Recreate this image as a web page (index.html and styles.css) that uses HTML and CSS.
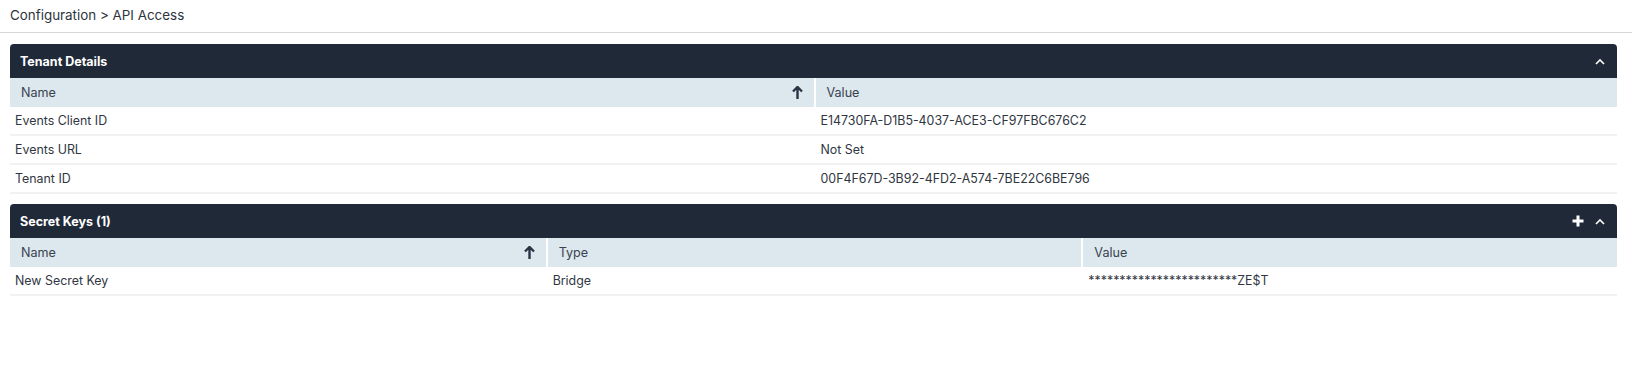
FILE: index.html
```html
<!DOCTYPE html>
<html>
<head>
<meta charset="utf-8">
<link rel="stylesheet" href="styles.css">
</head>
<body>
<div class="breadcrumb">Configuration &gt; API Access</div>
<main class="content">
  <section class="panel">
    <div class="panel-head">
      <span class="panel-title">Tenant Details</span>
      <span class="panel-actions">
        <svg class="chev" width="10" height="7" viewBox="0 0 10 7"><path d="M1 6 L5 2 L9 6" fill="none" stroke="#fff" stroke-width="1.6"/></svg>
      </span>
    </div>
    <div class="grid cols-2">
      <div class="th">Name
        <svg class="sort" width="11" height="14" viewBox="0 0 11 14"><path d="M5.5 1 L5.5 13 M1 5.5 L5.5 1 L10 5.5" fill="none" stroke="#2a3444" stroke-width="2.4" stroke-linejoin="miter"/></svg>
      </div>
      <div class="th">Value</div>
      <div class="td">Events Client ID</div><div class="td val">E14730FA-D1B5-4037-ACE3-CF97FBC676C2</div>
      <div class="td">Events URL</div><div class="td val">Not Set</div>
      <div class="td">Tenant ID</div><div class="td val">00F4F67D-3B92-4FD2-A574-7BE22C6BE796</div>
    </div>
  </section>
  <section class="panel">
    <div class="panel-head">
      <span class="panel-title">Secret Keys (1)</span>
      <span class="panel-actions">
        <svg class="plus" width="12" height="12" viewBox="0 0 12 12"><path d="M6 0.5 V11.5 M0.5 6 H11.5" fill="none" stroke="#fff" stroke-width="3"/></svg>
        <svg class="chev" width="10" height="7" viewBox="0 0 10 7"><path d="M1 6 L5 2 L9 6" fill="none" stroke="#fff" stroke-width="1.6"/></svg>
      </span>
    </div>
    <div class="grid cols-3">
      <div class="th">Name
        <svg class="sort" width="11" height="14" viewBox="0 0 11 14"><path d="M5.5 1 L5.5 13 M1 5.5 L5.5 1 L10 5.5" fill="none" stroke="#2a3444" stroke-width="2.4" stroke-linejoin="miter"/></svg>
      </div>
      <div class="th">Type</div>
      <div class="th">Value</div>
      <div class="td">New Secret Key</div><div class="td val">Bridge</div><div class="td val">************************ZE$T</div>
    </div>
  </section>
</main>
</body>
</html>
```

FILE: styles.css
```css
* { box-sizing: border-box; }
body {
  margin: 0;
  font-family: Inter, "Noto Sans", sans-serif;
  color: #2b2f36;
  background: #fff;
}
.breadcrumb {
  height: 33px;
  padding: 6px 10px 0;
  font-size: 13.4px;
  line-height: 18px;
  color: #2d3440;
  border-bottom: 1px solid #d4d6d9;
}
.content {
  padding: 11px 15px 0 10px;
}
.panel {
  margin-bottom: 10px;
}
.panel-head {
  height: 34px;
  background: #202938;
  border-radius: 4px 4px 0 0;
  display: flex;
  align-items: center;
  justify-content: space-between;
  padding: 0 12px 0 10px;
}
.panel-title {
  color: #fff;
  font-weight: 700;
  font-size: 12.5px;
}
.panel-actions {
  display: flex;
  align-items: center;
  gap: 11px;
}
.chev { display: block; }
.plus { display: block; }
.grid {
  display: grid;
}
.cols-2 { grid-template-columns: 1fr 1fr; }
.cols-3 { grid-template-columns: 1fr 1fr 1fr; }
.th {
  height: 29px;
  background: #dce8ed;
  font-size: 12.6px;
  color: #3a4250;
  display: flex;
  align-items: center;
  justify-content: space-between;
  padding: 0 11px 0 11px;
  border-left: 2px solid #fff;
}
.th:first-child { border-left: none; }
.sort { display: block; }
.td {
  height: 29px;
  font-size: 12.4px;
  color: #30363f;
  display: flex;
  align-items: center;
  padding: 0 5px;
  border-bottom: 2px solid #f1f2f3;
}
.td.val { padding-left: 7px; }
```
